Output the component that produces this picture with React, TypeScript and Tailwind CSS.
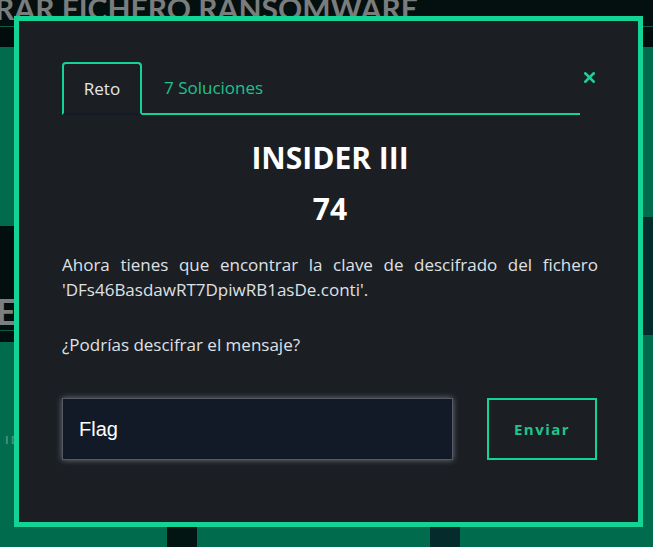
import { X } from "lucide-react"

const font = { fontFamily: "'Open Sans', 'Noto Sans', sans-serif" }

const Backdrop = () => (
  <div className="flex h-[547px] w-full flex-col overflow-hidden bg-[#006c4d]">
    {/* page title bar, half hidden behind the modal */}
    <div className="h-[26px] overflow-hidden bg-[#040f0f]">
      <h1 className="-ml-[5px] -mt-[12px] whitespace-nowrap text-[30px] font-bold leading-[40px] text-[#7b7d7d]" style={{ fontFamily: "Lato, sans-serif" }}>
        RAR FICHERO RANSOMWARE
      </h1>
    </div>
    <div className="h-px bg-[#0e5a44]" />
    <div className="h-[20px] bg-[#030c0c]" />

    <div className="mt-[170px] flex items-start justify-between">
      <div className="mt-[9px] flex w-[16px] flex-col bg-[#030f0e]">
        <div className="h-[66px]" />
        <span className="-ml-[4px] text-[36px] font-bold leading-[38px] text-[#7c7f7f]" style={{ fontFamily: "Lato, sans-serif" }}>E</span>
        <div className="h-px bg-[#0c5a44]" />
        <div className="h-[11px]" />
      </div>
      <div className="h-[118px] w-[12px] bg-[#062b2b]" />
    </div>

    <div className="mt-[90px] pl-[5px] text-[11px] font-bold tracking-[2px] text-[#4f8f7d]">ID</div>

    <div className="mt-auto flex h-[20px] gap-[233px] pl-[167px]">
      <div className="w-[30px] bg-[#021512]" />
      <div className="w-[30px] bg-[#062b2d]" />
    </div>
  </div>
)

export default function App() {
  return (
    <div className="relative h-[547px] w-full" style={font}>
      <Backdrop />

      {/* modal */}
      <div className="absolute left-[14px] top-[16px] flex h-[511px] w-[629px] flex-col border-[5px] border-[#13d494] bg-[#1b1f24] pl-[43px] pr-[40px] pt-[41px]">
        <div className="flex items-start">
          <div className="flex w-[518px] items-end">
            <div className="flex h-[53px] w-[80px] items-center justify-center rounded-t-[4px] border-2 border-[#13d494] border-b-[#141a2b] text-[17px] text-[#e6e6e6]">
              Reto
            </div>
            <div className="flex h-[53px] flex-1 items-center border-b-2 border-[#13d494] pl-[22px] text-[17px] text-[#1fc28b]">
              7 Soluciones
            </div>
          </div>
          <div className="flex h-[30px] flex-1 items-center justify-center pl-[1px]">
            <X className="h-[17px] w-[17px] text-[#17d396]" strokeWidth={3.5} />
          </div>
        </div>

        <h2 className="mt-[25px] text-center text-[30px] font-bold leading-[36px] text-white">INSIDER III</h2>
        <div className="mt-[15px] text-center text-[30px] font-bold leading-[36px] text-white">74</div>

        <p className="mt-[25px] text-justify text-[17px] leading-[25px] text-[#dfe1e4]">
          Ahora tienes que encontrar la clave de descifrado del fichero 'DFs46BasdawRT7DpiwRB1asDe.conti'.
        </p>
        <p className="mt-[30px] text-[17px] leading-[25px] text-[#dfe1e4]">¿Podrías descifrar el mensaje?</p>

        <div className="mt-[41px] flex gap-[34px]">
          <div className="flex h-[62px] w-[391px] items-center border border-[#555b66] bg-[#121a28] pl-[16px] shadow-[0_0_6px_rgba(220,220,230,0.45)]">
            <span className="text-[20px] text-white" style={{ fontFamily: "'Liberation Sans', Arial, sans-serif" }}>Flag</span>
          </div>
          <button className="flex h-[62px] w-[110px] items-center justify-center border-2 border-[#13d494] text-[15px] font-bold tracking-[1.5px] text-[#20c58d]">
            Enviar
          </button>
        </div>
      </div>
    </div>
  )
}
